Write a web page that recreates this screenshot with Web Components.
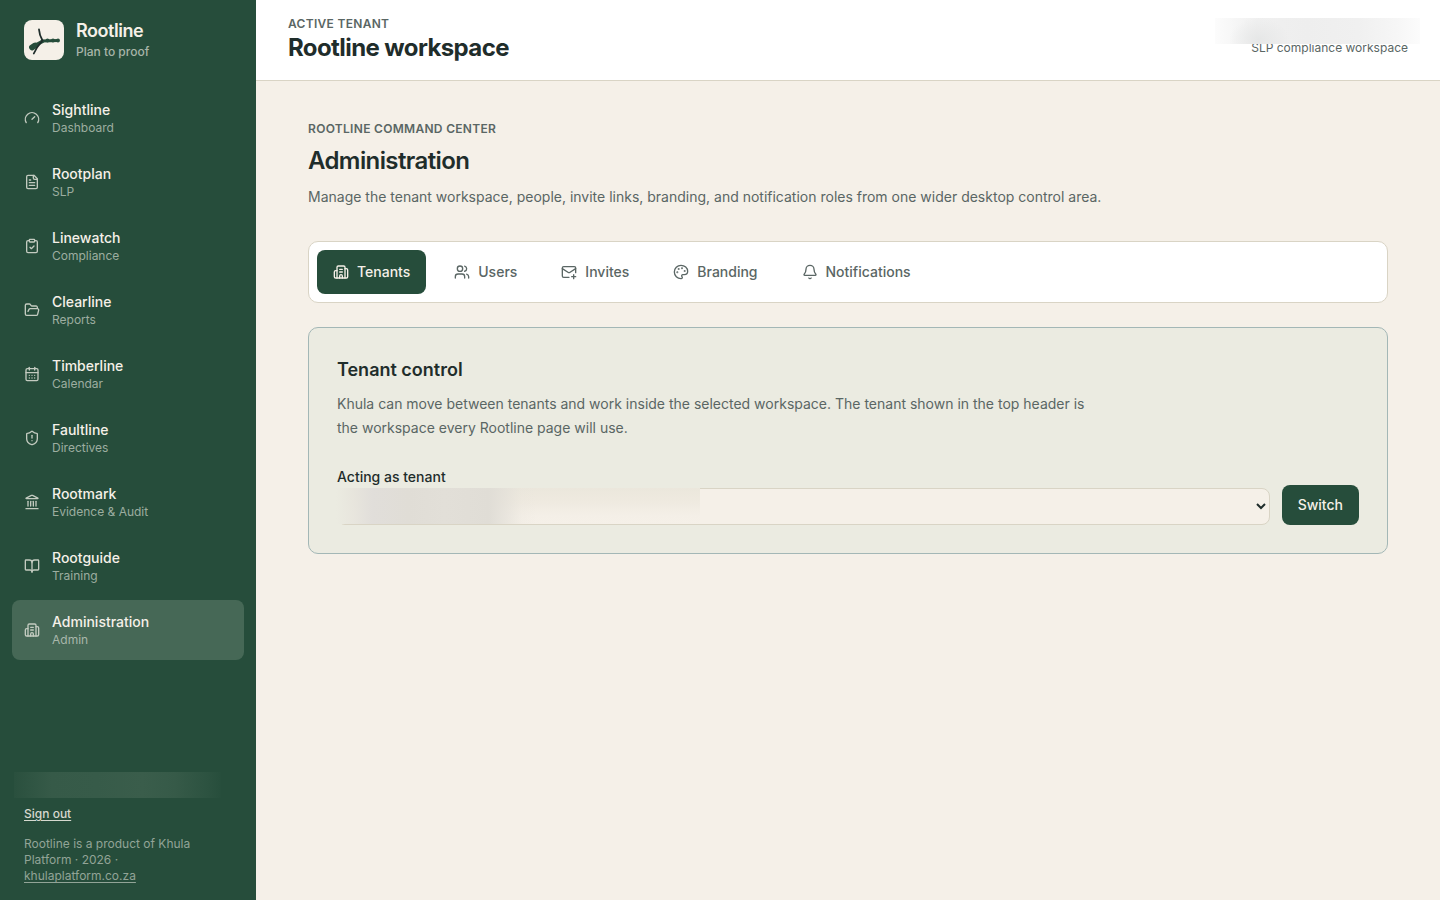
<!DOCTYPE html>
<html lang="en">
<head>
<meta charset="utf-8">
<title>Rootline</title>
<style>
    :root {
        --green: #264d3b;
        --cream: #f5f0e8;
        --ink: #1f2d2b;
        --muted: #5a6664;
        --line: #d9d4c5;
    }
    body {
        margin: 0;
        font-family: Inter, "Liberation Sans", sans-serif;
        font-size: 14px;
        line-height: 20px;
        color: var(--ink);
        background: var(--cream);
    }
</style>
</head>
<body>
<rootline-app></rootline-app>

<script>
// Line icons on a 24x24 grid
const ICONS = {
    gauge: `<path d="m12 14 4-4"/><path d="M3.34 19a10 10 0 1 1 17.32 0"/>`,
    file: `<path d="M15 2H6a2 2 0 0 0-2 2v16a2 2 0 0 0 2 2h12a2 2 0 0 0 2-2V7Z"/><path d="M14 2v4a2 2 0 0 0 2 2h4"/><path d="M10 9H8"/><path d="M16 13H8"/><path d="M16 17H8"/>`,
    clipboard: `<rect width="8" height="4" x="8" y="2" rx="1"/><path d="M16 4h2a2 2 0 0 1 2 2v14a2 2 0 0 1-2 2H6a2 2 0 0 1-2-2V6a2 2 0 0 1 2-2h2"/><path d="m9 14 2 2 4-4"/>`,
    folder: `<path d="m6 14 1.5-2.9A2 2 0 0 1 9.24 10H20a2 2 0 0 1 1.94 2.5l-1.54 6a2 2 0 0 1-1.95 1.5H4a2 2 0 0 1-2-2V5a2 2 0 0 1 2-2h3.9a2 2 0 0 1 1.69.9l.81 1.2a2 2 0 0 0 1.67.9H18a2 2 0 0 1 2 2v2"/>`,
    calendar: `<path d="M8 2v4"/><path d="M16 2v4"/><rect width="18" height="18" x="3" y="4" rx="2"/><path d="M3 10h18"/><path d="M8 14h.01"/><path d="M12 14h.01"/><path d="M16 14h.01"/><path d="M8 18h.01"/><path d="M12 18h.01"/><path d="M16 18h.01"/>`,
    shield: `<path d="M20 13c0 5-3.5 7.5-7.66 8.95a1 1 0 0 1-.67-.01C7.5 20.5 4 18 4 13V6a1 1 0 0 1 1-1c2 0 4.5-1.2 6.24-2.72a1.17 1.17 0 0 1 1.52 0C14.51 3.81 17 5 19 5a1 1 0 0 1 1 1z"/><path d="M12 8v4"/><path d="M12 16h.01"/>`,
    landmark: `<path d="M10 18v-7"/><path d="M11.12 2.198a2 2 0 0 1 1.76.006l7.866 3.847c.476.233.31.949-.22.949H3.474c-.53 0-.695-.716-.22-.949z"/><path d="M14 18v-7"/><path d="M18 18v-7"/><path d="M3 22h18"/><path d="M6 18v-7"/>`,
    book: `<path d="M12 7v14"/><path d="M3 18a1 1 0 0 1-1-1V4a1 1 0 0 1 1-1h5a4 4 0 0 1 4 4 4 4 0 0 1 4-4h5a1 1 0 0 1 1 1v13a1 1 0 0 1-1 1h-6a3 3 0 0 0-3 3 3 3 0 0 0-3-3z"/>`,
    building: `<path d="M10 12h4"/><path d="M10 8h4"/><path d="M14 21v-3a2 2 0 0 0-4 0v3"/><path d="M6 10H4a2 2 0 0 0-2 2v7a2 2 0 0 0 2 2h16a2 2 0 0 0 2-2V9a2 2 0 0 0-2-2h-2"/><path d="M6 21V5a2 2 0 0 1 2-2h8a2 2 0 0 1 2 2v16"/>`,
    users: `<path d="M16 21v-2a4 4 0 0 0-4-4H6a4 4 0 0 0-4 4v2"/><path d="M16 3.128a4 4 0 0 1 0 7.744"/><path d="M22 21v-2a4 4 0 0 0-3-3.87"/><circle cx="9" cy="7" r="4"/>`,
    mail: `<path d="M22 13V6a2 2 0 0 0-2-2H4a2 2 0 0 0-2 2v12c0 1.1.9 2 2 2h8"/><path d="m22 7-8.97 5.7a1.94 1.94 0 0 1-2.06 0L2 7"/><path d="M19 16v6"/><path d="M16 19h6"/>`,
    palette: `<path d="M12 22a1 1 0 0 1 0-20 10 9 0 0 1 10 9 5 5 0 0 1-5 5h-2.25a1.75 1.75 0 0 0-1.4 2.8l.3.4a1.75 1.75 0 0 1-1.4 2.8z"/><g fill="currentColor"><circle cx="13.5" cy="6.5" r=".5"/><circle cx="17.5" cy="10.5" r=".5"/><circle cx="6.5" cy="12.5" r=".5"/><circle cx="8.5" cy="7.5" r=".5"/></g>`,
    bell: `<path d="M10.268 21a2 2 0 0 0 3.464 0"/><path d="M3.262 15.326A1 1 0 0 0 4 17h16a1 1 0 0 0 .74-1.673C19.41 13.956 18 12.499 18 8A6 6 0 0 0 6 8c0 4.499-1.411 5.956-2.738 7.326"/>`
};

class LineIcon extends HTMLElement {
    constructor() {
        super();
        this.attachShadow({ mode: "open" });
    }

    connectedCallback() {
        this.shadowRoot.innerHTML = `
            <style>
                :host { display: block; flex: none; width: 16px; height: 16px; }
                svg { display: block; }
            </style>
            <svg width="16" height="16" viewBox="0 0 24 24" fill="none" stroke="currentColor" stroke-width="2"
                stroke-linecap="round" stroke-linejoin="round">${ICONS[this.getAttribute("name")]}</svg>
        `;
    }
}
customElements.define("line-icon", LineIcon);

// Sidebar link: icon, product name and a plain description
class NavItem extends HTMLElement {
    constructor() {
        super();
        this.attachShadow({ mode: "open" });
    }

    connectedCallback() {
        this.shadowRoot.innerHTML = `
            <style>
                :host {
                    display: flex;
                    align-items: center;
                    gap: 12px;
                    padding: 12px;
                    border-radius: 8px;
                    color: var(--cream);
                }
                :host([active]) { background: #466856; }
                line-icon { color: #c3cbc0; }
                .name { font-weight: 500; }
                .hint { font-size: 12px; line-height: 16px; color: #9dada0; }
                :host([active]) .hint { color: #a9b7ab; }
            </style>
            <line-icon name="${this.getAttribute("icon")}"></line-icon>
            <div>
                <div class="name"><slot></slot></div>
                <div class="hint">${this.getAttribute("hint")}</div>
            </div>
        `;
    }
}
customElements.define("nav-item", NavItem);

class SideMenu extends HTMLElement {
    constructor() {
        super();
        this.attachShadow({ mode: "open" });
        this.shadowRoot.innerHTML = `
            <style>
                :host {
                    display: flex;
                    flex-direction: column;
                    box-sizing: border-box;
                    width: 256px;
                    height: 900px;
                    background: var(--green);
                    color: var(--cream);
                }
                .brand { display: flex; align-items: center; gap: 12px; padding: 20px 24px 16px; }
                .brand svg { display: block; }
                .brand b { display: block; font-size: 18px; line-height: 22px; font-weight: 600; letter-spacing: -0.45px; }
                .brand span { display: block; margin-top: 2px; font-size: 12px; line-height: 16px; font-weight: 500; color: #a8b5a9; }
                nav { flex: 1; display: flex; flex-direction: column; gap: 4px; padding: 12px; }
                footer { position: relative; padding: 0 24px 16px; font-size: 12px; line-height: 16px; color: #92a497; }
                a { text-decoration: underline; text-underline-offset: 2px; }
                .out { display: block; margin-bottom: 14px; font-weight: 500; color: #d6d9cf; }
                p { margin: 0; }
                /* hidden account name */
                .mask {
                    position: absolute;
                    left: 14px;
                    top: -34px;
                    width: 207px;
                    height: 26px;
                    background: linear-gradient(90deg, #2a503e, #365a48 18%, #375b49 40%, #3a5d4b 62%, #365a48 78%, #2c5240 94%, #274e3c);
                }
            </style>
            <div class="brand">
                <svg width="40" height="40" viewBox="0 0 40 40">
                    <rect width="40" height="40" rx="8" fill="#f5f0e8"/>
                    <g fill="none" stroke-linecap="round">
                        <path d="M8 27.5 11 25.5" stroke="#264d3b" stroke-width="5.8"/>
                        <path d="M10 26 18.3 21.5" stroke="#264d3b" stroke-width="3.6"/>
                        <path d="M18 21 34 20.5" stroke="#264d3b" stroke-width="2.8"/>
                        <path d="M23.5 20.5h.01M29 20.5h.01M34 20.5h.01" stroke="#264d3b" stroke-width="3.8"/>
                        <path d="M15 9.5C15.3 14 16.5 17 18.5 20.5C15 24.5 12 28.5 9.8 33.5" stroke="#1f2d2b" stroke-width="1.8"/>
                    </g>
                </svg>
                <div><b>Rootline</b><span>Plan to proof</span></div>
            </div>
            <nav>
                <nav-item icon="gauge" hint="Dashboard">Sightline</nav-item>
                <nav-item icon="file" hint="SLP">Rootplan</nav-item>
                <nav-item icon="clipboard" hint="Compliance">Linewatch</nav-item>
                <nav-item icon="folder" hint="Reports">Clearline</nav-item>
                <nav-item icon="calendar" hint="Calendar">Timberline</nav-item>
                <nav-item icon="shield" hint="Directives">Faultline</nav-item>
                <nav-item icon="landmark" hint="Evidence &amp;amp; Audit">Rootmark</nav-item>
                <nav-item icon="book" hint="Training">Rootguide</nav-item>
                <nav-item icon="building" hint="Admin" active>Administration</nav-item>
            </nav>
            <footer>
                <div class="mask"></div>
                <a class="out">Sign out</a>
                <p>Rootline is a product of Khula Platform · 2026 · <a>khulaplatform.co.za</a></p>
            </footer>
        `;
    }
}
customElements.define("side-menu", SideMenu);

class TopHeader extends HTMLElement {
    constructor() {
        super();
        this.attachShadow({ mode: "open" });
        this.shadowRoot.innerHTML = `
            <style>
                :host {
                    display: flex;
                    justify-content: space-between;
                    align-items: center;
                    position: relative;
                    box-sizing: border-box;
                    height: 81px;
                    padding: 0 32px;
                    background: #fff;
                    border-bottom: 1px solid var(--line);
                }
                .label { font-size: 12px; line-height: 16px; font-weight: 600; letter-spacing: 0.3px; color: var(--muted); }
                h1 { margin: 0; font-size: 24px; line-height: 32px; font-weight: 700; letter-spacing: -0.6px; }
                .who { padding-top: 15px; font-size: 12px; line-height: 16px; color: var(--muted); }
                /* hidden account name */
                .mask {
                    position: absolute;
                    left: 959px;
                    top: 18px;
                    width: 205px;
                    height: 26px;
                    background:
                        radial-gradient(ellipse 30px 22px at 44px 22px, #e6e7e7, #e6e7e700),
                        linear-gradient(90deg, #fcfcfc, #f0f0f0 20%, #eeeeee 45%, #f0f0f0 70%, #f6f6f6 88%, #fcfcfc);
                }
            </style>
            <div>
                <div class="label">ACTIVE TENANT</div>
                <h1>Rootline workspace</h1>
            </div>
            <div class="who">SLP compliance workspace</div>
            <div class="mask"></div>
        `;
    }
}
customElements.define("top-header", TopHeader);

class TabItem extends HTMLElement {
    constructor() {
        super();
        this.attachShadow({ mode: "open" });
    }

    connectedCallback() {
        this.shadowRoot.innerHTML = `
            <style>
                :host {
                    display: flex;
                    align-items: center;
                    gap: 8px;
                    height: 44px;
                    padding: 0 16px;
                    border-radius: 8px;
                    font-weight: 500;
                    color: var(--muted);
                }
                :host([active]) { background: var(--green); color: var(--cream); }
            </style>
            <line-icon name="${this.getAttribute("icon")}"></line-icon>
            <slot></slot>
        `;
    }
}
customElements.define("tab-item", TabItem);

// Card with the tenant picker
class TenantControl extends HTMLElement {
    constructor() {
        super();
        this.attachShadow({ mode: "open" });
        this.shadowRoot.innerHTML = `
            <style>
                :host {
                    display: block;
                    box-sizing: border-box;
                    height: 227px;
                    padding: 28px;
                    border: 1px solid #a3b7b6;
                    border-radius: 10px;
                    background: #ebebe1;
                }
                h3 { margin: 0; font-size: 18px; line-height: 28px; font-weight: 600; }
                p { margin: 8px 0 0; max-width: 768px; line-height: 24px; color: var(--muted); }
                .row { display: flex; align-items: flex-end; gap: 12px; margin-top: 27px; }
                label { position: relative; flex: 1; display: block; font-weight: 500; }
                select {
                    display: block;
                    box-sizing: border-box;
                    width: 100%;
                    height: 37px;
                    margin-top: 1px;
                    padding: 0 8px;
                    border: 1px solid var(--line);
                    border-radius: 8px;
                    background: var(--cream);
                    color: var(--ink);
                    font: inherit;
                }
                button {
                    height: 40px;
                    padding: 0 16px;
                    border: 0;
                    border-radius: 8px;
                    background: var(--green);
                    color: var(--cream);
                    font: inherit;
                    font-weight: 500;
                }
                /* hidden tenant name */
                .mask {
                    position: absolute;
                    left: -1px;
                    top: 21px;
                    width: 364px;
                    height: 36px;
                    background:
                        linear-gradient(90deg, #ebebe1, #e6e4dcdd 5%, #e1deda 10%, #e0ddd6 20%, #e2dfd8 30%, #e0ddd6 42%, #e2dfd899 47%, #e8e4dc33 51%, #ebe7df00 55%),
                        linear-gradient(#ebe7dc, #efeae0 40%, #f4efe7 75%, #f5f0e8);
                }
            </style>
            <h3>Tenant control</h3>
            <p>Khula can move between tenants and work inside the selected workspace. The tenant shown in the top header is the workspace every Rootline page will use.</p>
            <div class="row">
                <label>Acting as tenant
                    <select><option></option></select>
                    <div class="mask"></div>
                </label>
                <button type="button">Switch</button>
            </div>
        `;
    }
}
customElements.define("tenant-control", TenantControl);

class RootlineApp extends HTMLElement {
    constructor() {
        super();
        this.attachShadow({ mode: "open" });
        this.shadowRoot.innerHTML = `
            <style>
                :host { display: grid; grid-template-columns: 256px 1fr; height: 900px; }
                main { padding: 40px 52px; }
                .label { font-size: 12px; line-height: 16px; font-weight: 600; letter-spacing: 0.3px; color: var(--muted); }
                h2 { margin: 8px 0; font-size: 24px; line-height: 32px; font-weight: 600; letter-spacing: -0.6px; }
                p { margin: 0; line-height: 24px; color: var(--muted); }
                .tabs {
                    display: flex;
                    gap: 12px;
                    margin: 32px 0 24px;
                    padding: 8px;
                    border: 1px solid var(--line);
                    border-radius: 10px;
                    background: #fff;
                }
            </style>
            <side-menu></side-menu>
            <div>
                <top-header></top-header>
                <main>
                    <div class="label">ROOTLINE COMMAND CENTER</div>
                    <h2>Administration</h2>
                    <p>Manage the tenant workspace, people, invite links, branding, and notification roles from one wider desktop control area.</p>
                    <div class="tabs">
                        <tab-item icon="building" active>Tenants</tab-item>
                        <tab-item icon="users">Users</tab-item>
                        <tab-item icon="mail">Invites</tab-item>
                        <tab-item icon="palette">Branding</tab-item>
                        <tab-item icon="bell">Notifications</tab-item>
                    </div>
                    <tenant-control></tenant-control>
                </main>
            </div>
        `;
    }
}
customElements.define("rootline-app", RootlineApp);
</script>
</body>
</html>
